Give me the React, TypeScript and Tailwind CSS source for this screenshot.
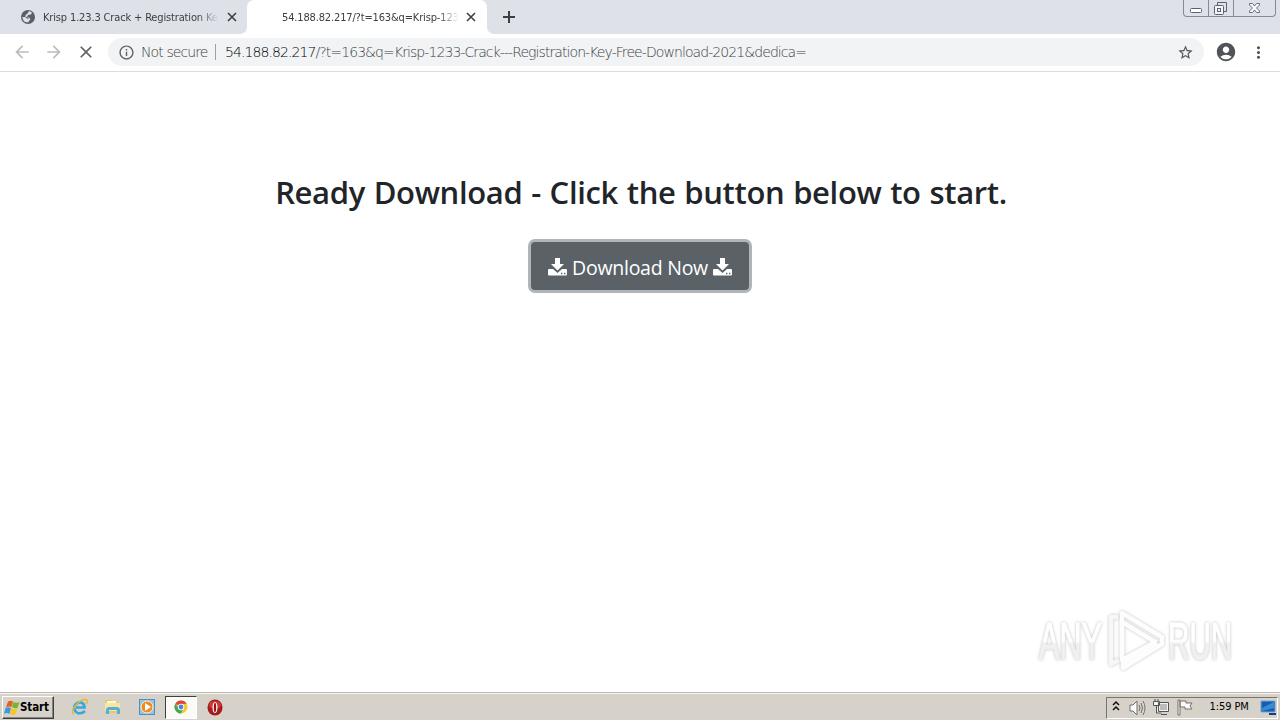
import type { ReactNode } from "react";
import { MdAccountCircle, MdArrowBack, MdArrowForward, MdClose, MdInfoOutline, MdMoreVert, MdStarBorder } from "react-icons/md";

function TabTitle({ children, className }: { children: ReactNode; className: string }) {
  return (
    <span className={`mt-px whitespace-nowrap font-['DejaVu_Sans_Condensed','DejaVu_Sans',sans-serif] text-[11px] leading-[16px] text-[#3c4043] [font-stretch:condensed] [mask-image:linear-gradient(to_right,black_88%,transparent)] ${className}`}>
      {children}
    </span>
  );
}

function TabClose({ className }: { className: string }) {
  return (
    <svg className={`shrink-0 ${className}`} width="10" height="10" viewBox="0 0 10 10" stroke="#3c4043" strokeWidth="1.6">
      <path d="m1 1 8 8M9 1 1 9" />
    </svg>
  );
}

function WindowControls() {
  return (
    <div className="ml-auto mr-[4px] flex h-[17px] w-[93px] rounded-b-[4px] border border-t-0 border-[#858b96] text-[#596270]">
      <div className="w-[25px] border-r border-[#858b96]">
        <svg width="24" height="16" fill="#fff" stroke="currentColor"><rect x="6.5" y="8.5" width="11" height="4" rx="1" /></svg>
      </div>
      <div className="w-[25px] border-r border-[#858b96]">
        <svg width="24" height="16" fill="none" stroke="currentColor">
          <path d="M8.500 5V2.500H17.500V11.500H15" />
          <rect x="5.500" y="5.500" width="9" height="9" rx="1" fill="#f4f5f7" />
          <rect x="8.500" y="8.500" width="3" height="3" />
        </svg>
      </div>
      <svg width="41" height="16" fill="#f8f9fa" stroke="currentColor" strokeWidth="0.9">
        <path d="M15.500 3.500h3l2 2.500 2-2.500h3v1.500l-3 3 3 3v1.500h-3l-2-2.500-2 2.500h-3V11l3-3-3-3z" />
      </svg>
    </div>
  );
}

function TabStrip() {
  return (
    <div className="flex h-[34px] bg-white">
      <div className="flex h-[34px] w-[247px] items-center rounded-br-[7px] bg-[#dee1e8] pl-[20px]">
        <svg className="shrink-0" width="16" height="16" viewBox="0 0 16 16">
          <circle cx="8" cy="8" r="7" fill="#5a5f65" />
          <path d="M9 2 7.500 4.500 5.500 6v2h3l2 2-2.500 3.500L4 12.500 2.500 9 2.500 8H5l3 2 1-1-2-1 1-2 3-.500 1-2z" fill="#dee1e8" />
        </svg>
        <TabTitle className="ml-[7px] w-[176px]"><span className="tracking-[-0.15px]">Krisp 1.23.3 Crack + Registration Ke</span></TabTitle>
        <TabClose className="ml-[8px]" />
      </div>
      <div className="bg-[#dee1e8]">
        <div className="flex h-[34px] w-[240px] items-center rounded-t-[7px] bg-white pl-[35px]">
          <TabTitle className="w-[177px]"><span className="tracking-[-0.15px]">54.188.82.217/?t=163&amp;q=Krisp-123</span></TabTitle>
          <TabClose className="ml-[7px]" />
        </div>
      </div>
      <div className="flex flex-1 rounded-bl-[7px] bg-[#dee1e8]">
        <svg className="ml-[14px] mt-[9px]" width="16" height="16" stroke="#3c4043" strokeWidth="2"><path d="M8 2v12M2 8h12" /></svg>
        <WindowControls />
      </div>
    </div>
  );
}

function Toolbar() {
  return (
    <div className="flex h-[38px] items-center border-b border-[#dadce0] bg-white pb-px pl-[12px]">
      <MdArrowBack className="size-[20px] text-[#babcbe]" />
      <MdArrowForward className="ml-[12px] size-[20px] text-[#babcbe]" />
      <MdClose className="ml-[12px] size-[20px] text-[#5f6368]" />
      <div className="ml-[12px] flex h-[28px] w-[1096px] items-center rounded-full bg-[#f1f3f4] pl-[10px] font-['DejaVu_Sans',sans-serif] text-[14px] font-extralight leading-[20px] text-[#3c4043]">
        <MdInfoOutline className="size-[17px] shrink-0 text-[#5f6368]" />
        <span className="ml-[6px] w-[74px] whitespace-nowrap tracking-[-0.9px]">Not secure</span>
        <span className="h-[16px] w-px bg-[#9aa0a6]" />
        <span className="ml-[9px] whitespace-nowrap tracking-[-0.92px]"><span className="text-black">54.188.82.217</span>/?t=163&amp;q=Krisp-1233-Crack---Registration-Key-Free-Download-2021&amp;dedica=</span>
        <MdStarBorder className="ml-auto mr-[10px] size-[17px] shrink-0 text-[#505459]" />
      </div>
      <MdAccountCircle className="ml-[11px] size-[22px] text-[#505459]" />
      <MdMoreVert className="ml-[12px] size-[19px] text-[#505459]" />
    </div>
  );
}

function Watermark() {
  return (
    <svg className="absolute bottom-[12px] right-[36px] [filter:drop-shadow(0_0_1.5px_rgba(0,0,0,.25))]" width="220" height="80" viewBox="1024 600 220 80">
      <defs>
        <linearGradient id="mark" x2="0" y2="1"><stop offset=".5" stopColor="#fff" /><stop offset=".55" stopColor="#f0f0f0" /></linearGradient>
      </defs>
      <g fill="url(#mark)" stroke="url(#mark)" strokeWidth="1.2" fontFamily="'Liberation Sans Narrow', 'Liberation Sans', sans-serif" fontSize="51">
        <text transform="translate(1039 659) scale(.63 1)" textLength="100" lengthAdjust="spacingAndGlyphs">ANY</text>
        <text transform="translate(1168 659) scale(.63 1)" textLength="102" lengthAdjust="spacingAndGlyphs">RUN</text>
      </g>
      <g fill="none" stroke="#fdfdfd" strokeWidth="4.5" strokeLinejoin="round">
        <path d="M1118 617h-7v47l8-4" stroke="#f7f7f7" />
        <path d="M1122 657v-44l40 24v7l-39 24v-5l34-20" />
        <path d="m1122 622 33 20-33 18z" />
      </g>
    </svg>
  );
}

function Content() {
  return (
    <main className="relative flex h-[620px] flex-col items-center bg-white">
      <h1 className="mt-[97px] whitespace-nowrap pl-[2px] font-['Open_Sans',sans-serif] text-[31px] font-semibold leading-[46px] tracking-[-0.35px] text-[#212529] [word-spacing:1.1px]">Ready Download - Click the button below to start.</h1>
      <button className="mt-[24px] flex h-[54px] w-[224px] items-center justify-center gap-[5px] rounded-[7px] border-[3px] border-[#b0b5ba] bg-[#5a6268] pt-[2px] font-['Open_Sans',sans-serif] text-[19.5px] text-white">
        <DownloadIcon />
        <span className="mt-[2px] whitespace-nowrap tracking-[-0.25px]">Download Now</span>
        <DownloadIcon />
      </button>
      <Watermark />
    </main>
  );
}

function DownloadIcon() {
  return (
    <svg className="shrink-0" width="19" height="18" viewBox="0 0 19 18" fill="white">
      <path d="M7 0h5v6h4l-6.500 6.500L3 6h4z" />
      <path fillRule="evenodd" d="M1 11h4l4.500 4L14 11h4q1 0 1 1v4.500q0 1-1 1H1q-1 0-1-1V12q0-1 1-1zm12 3.800v1.400h1.400v-1.400zm3 0v1.400h1.400v-1.400z" />
    </svg>
  );
}

function Taskbar() {
  return (
    <footer className="flex h-[28px] items-center border-t border-[#bbb8b1] bg-[#d6d2ca] shadow-[inset_0_1px_0_#f5f4f1]">
      <button className="ml-[2px] mt-[2px] flex h-[23px] w-[52px] items-center border border-b-[#404040] border-l-white border-r-[#404040] border-t-white pl-px font-['DejaVu_Sans_Condensed','DejaVu_Sans',sans-serif] text-[11.5px] font-bold text-black shadow-[inset_-1px_-1px_0_#858580]">
        <svg className="shrink-0" width="16" height="16" viewBox="0 0 16 16">
          <path d="M4 1.500q3-1.500 5 0L7.500 7Q5 6 2 7.500z" fill="#ed5b20" /><path d="M9.500 2q3 1.500 6 0l-2 6q-3 1-5.500-1z" fill="#75b62d" />
          <path d="M1.500 8q3-1.500 5.500 0l-1.500 6q-3-2-5.500 0z" fill="#389bdd" /><path d="M7.500 8.500q3 1.500 6 0l-2 6q-3 1-5.500-.500z" fill="#fbc522" />
        </svg>
        <span className="tracking-[-0.1px]">Start</span>
      </button>
      <svg className="ml-[17px]" width="17" height="18" viewBox="0 0 17 18" fill="none">
        <path d="M14 13Q11 16 6.500 15 2 12 3.500 8 6 4 10 4.500 13.500 5.500 13.500 9.500H5" stroke="#36a7df" strokeWidth="2.700" />
        <path d="M3 16Q-1 14 5 7t11-5q1 1-1 4" stroke="#e8b832" strokeWidth="1.400" />
      </svg>
      <svg className="ml-[16px] mt-px" width="17" height="18" viewBox="0 0 17 18">
        <path d="M1 2h7l1 2h6v11H1z" fill="#e6c965" /><path d="M3 3h9v4H3z" fill="#fff9d9" /><path d="M1 5h15v8H1z" fill="#f7e6a0" />
        <path d="M2 16v-5l2-2h10l2 2v5h-3v-4H5v4z" fill="#56aedc" />
      </svg>
      <svg className="ml-[18px]" width="17" height="18" viewBox="0 0 17 18">
        <rect x=".5" y="1.500" width="15" height="15" fill="#8fc5ea" stroke="#4d91c4" /><circle cx="8" cy="9" r="6" fill="#f38b1c" stroke="#fff1d6" /><path d="m6 5 6 4-6 4z" fill="#fff" />
      </svg>
      <div className="ml-[9px] mt-px flex h-[23px] w-[32px] items-center justify-center border border-b-white border-l-[#404040] border-r-white border-t-[#404040] bg-[#fafaf9]">
        <svg width="14" height="14" viewBox="0 0 14 14">
          <circle cx="7" cy="7" r="6.500" fill="#f7ca2c" /><path d="M7 7 1.300 3.800A6.500 6.500 0 0 1 12.700 3.800L7 4z" fill="#e24439" />
          <path d="M1.300 3.800A6.500 6.500 0 0 0 7 13.500L9 9 5 9z" fill="#41a85b" /><circle cx="7" cy="7" r="3.200" fill="#fff" /><circle cx="7" cy="7" r="2.400" fill="#4785df" />
        </svg>
      </div>
      <svg className="ml-[10px] mt-px" width="16" height="17" viewBox="0 0 16 17">
        <ellipse cx="8" cy="8.500" rx="7.500" ry="8" fill="#a9181d" /><ellipse cx="8" cy="6" rx="6" ry="4" fill="#cb3b38" /><ellipse cx="8" cy="8.500" rx="2.500" ry="5.500" fill="#fff" /><ellipse cx="8" cy="8.500" rx="1.200" ry="4.800" fill="#9b1015" />
      </svg>
      <div className="ml-auto mr-[2px] mt-[2px] flex h-[22px] w-[172px] items-center border border-b-white border-l-[#77756f] border-r-white border-t-[#77756f] pl-[5px]">
        <svg className="mb-[3px]" width="8" height="12" fill="none" stroke="#111" strokeWidth="1.500"><path d="m1 5 3-3 3 3M1 10l3-3 3 3" /></svg>
        <svg className="ml-[9px]" width="17" height="16" fill="#fafafa" stroke="#73716d"><path d="M1 5h3l4-4v14l-4-4H1z" /><path fill="none" d="M10 5q2 3 0 6M12 3q3 5 0 10M14 1q4 7 0 14" /></svg>
        <svg className="ml-[7px]" width="17" height="17" fill="#f3f3f3" stroke="#555"><path d="M5.500 3.500h10v9h-10zM8 15.500h6M2 0v2M5 0v2M.500 2.500h6v4h-6zM3.500 7v7h5" /><path d="M7 5h7v6H7z" fill="#bbb" stroke="none" /></svg>
        <svg className="ml-[6px]" width="18" height="17" fill="#fafafa" stroke="#73716d"><path d="M2 1h2v15H2zM4 2h6v2h6l-2 3 2 3H9V8H4z" /></svg>
        <span className="ml-[16px] w-[48px] whitespace-nowrap font-['DejaVu_Sans_Condensed','DejaVu_Sans',sans-serif] text-[11px] tracking-[-0.1px] text-black [font-stretch:condensed]">1:59 PM</span>
        <svg className="ml-[3px]" width="17" height="15"><path d="M1 1h14v11H1z" fill="#165eb3" stroke="#77a5d2" /><path d="m2 8 12-6v6L2 11z" fill="#398bd3" /><path d="M9 14h7" stroke="#173d79" strokeWidth="2" /></svg>
      </div>
    </footer>
  );
}

export default function App() {
  return (
    <div className="flex h-[720px] w-[1280px] flex-col overflow-hidden bg-white">
      <TabStrip />
      <Toolbar />
      <Content />
      <Taskbar />
    </div>
  );
}
